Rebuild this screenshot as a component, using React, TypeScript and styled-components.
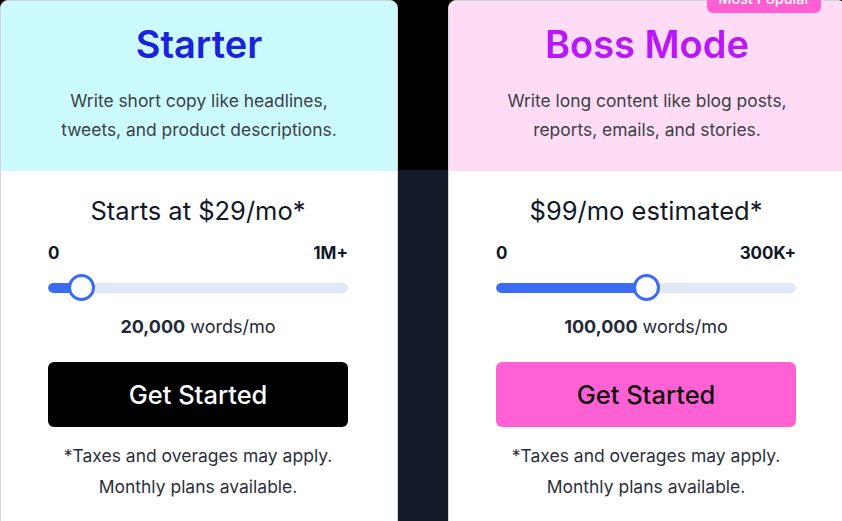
import React from "react";
import styled, { createGlobalStyle } from "styled-components";

const GlobalStyle = createGlobalStyle`
  html, body {
    margin: 0;
    padding: 0;
    background: #000;
    font-family: Inter, "Noto Sans", "Liberation Sans", sans-serif;
  }
`;

type Plan = {
  id: string;
  title: string;
  titleColor: string;
  headBg: string;
  desc: string[];
  price: string;
  max: string;
  percent: number;
  words: string;
  btnBg: string;
  btnColor: string;
  popular?: boolean;
};

const plans: Plan[] = [
  {
    id: "starter",
    title: "Starter",
    titleColor: "#1b22dc",
    headBg: "#cbfbfe",
    desc: ["Write short copy like headlines,", "tweets, and product descriptions."],
    price: "Starts at $29/mo*",
    max: "1M+",
    percent: 11,
    words: "20,000",
    btnBg: "#000000",
    btnColor: "#ffffff",
  },
  {
    id: "boss",
    title: "Boss Mode",
    titleColor: "#b817f7",
    headBg: "#ffdcf5",
    desc: ["Write long content like blog posts,", "reports, emails, and stories."],
    price: "$99/mo estimated*",
    max: "300K+",
    percent: 50,
    words: "100,000",
    btnBg: "#ff61d5",
    btnColor: "#111111",
    popular: true,
  },
];

const Page = styled.div`
  width: 842px;
  height: 521px;
  overflow: hidden;
  background: linear-gradient(to bottom, #000 0, #000 170px, #141a28 170px);
  display: flex;
  gap: 50px;
`;

const Card = styled.div`
  position: relative;
  flex: 0 0 398px;
  height: 560px;
  box-sizing: border-box;
  border: 1px solid #d4d4d8;
  border-radius: 8px;
  background: #fff;
`;

const Head = styled.div<{ $bg: string }>`
  background: ${(p) => p.$bg};
  height: 170px;
  box-sizing: border-box;
  padding-top: 20px;
  text-align: center;
  border-radius: 8px 8px 0 0;
`;

const Title = styled.h2<{ $color: string }>`
  margin: 0;
  font-size: 38px;
  line-height: 46px;
  font-weight: 600;
  color: ${(p) => p.$color};
`;

const Desc = styled.p`
  margin: 19px 0 0;
  font-size: 17.4px;
  line-height: 29px;
  color: #3b3f47;
`;

const Badge = styled.div`
  position: absolute;
  top: -18px;
  right: 24px;
  height: 30px;
  padding: 0 11px;
  display: flex;
  align-items: center;
  border-radius: 6px;
  background: #ff5fd2;
  color: #fff;
  font-size: 14.5px;
  font-weight: 500;
`;

const Body = styled.div`
  padding: 24px 49px 0 47px;
  display: flex;
  flex-direction: column;
  align-items: stretch;
  text-align: center;
`;

const Price = styled.div`
  font-size: 25.5px;
  line-height: 32px;
  color: #111827;
`;

const Labels = styled.div`
  margin-top: 16px;
  display: flex;
  justify-content: space-between;
  font-size: 17px;
  line-height: 20px;
  font-weight: 700;
  color: #111827;
`;

const Slider = styled.div`
  margin-top: 11px;
  height: 28px;
  position: relative;
  display: flex;
  align-items: center;
`;

const Track = styled.div`
  width: 100%;
  height: 10px;
  border-radius: 5px;
  background: #e1e8f8;
  overflow: hidden;
`;

const Fill = styled.div`
  height: 100%;
  background: #3b6cf6;
  border-radius: 5px;
`;

const Thumb = styled.div`
  position: absolute;
  top: 0;
  width: 27px;
  height: 27px;
  box-sizing: border-box;
  margin-left: -13.5px;
  border-radius: 50%;
  border: 3px solid #3b6cf6;
  background: #fff;
`;

const Words = styled.div`
  margin-top: 13px;
  font-size: 18px;
  line-height: 24px;
  color: #1f2937;
  b {
    font-weight: 700;
  }
`;

const Button = styled.button<{ $bg: string; $color: string }>`
  margin-top: 23px;
  height: 65px;
  border: none;
  border-radius: 6px;
  background: ${(p) => p.$bg};
  color: ${(p) => p.$color};
  font-family: inherit;
  font-size: 25.5px;
  font-weight: 500;
  cursor: pointer;
`;

const Note = styled.p`
  margin: 13px 0 0;
  font-size: 17.5px;
  line-height: 31px;
  color: #2d3039;
`;

const PlanCard = ({ plan }: { plan: Plan }) => (
  <Card>
    {plan.popular && <Badge>Most Popular</Badge>}
    <Head $bg={plan.headBg}>
      <Title $color={plan.titleColor}>{plan.title}</Title>
      <Desc>
        {plan.desc[0]}
        <br />
        {plan.desc[1]}
      </Desc>
    </Head>
    <Body>
      <Price>{plan.price}</Price>
      <Labels>
        <span>0</span>
        <span>{plan.max}</span>
      </Labels>
      <Slider>
        <Track>
          <Fill style={{ width: `${plan.percent}%` }} />
        </Track>
        <Thumb style={{ left: `${plan.percent}%` }} />
      </Slider>
      <Words>
        <b>{plan.words}</b> words/mo
      </Words>
      <Button $bg={plan.btnBg} $color={plan.btnColor}>
        Get Started
      </Button>
      <Note>
        *Taxes and overages may apply.
        <br />
        Monthly plans available.
      </Note>
    </Body>
  </Card>
);

export default function App() {
  return (
    <>
      <GlobalStyle />
      <Page>
        {plans.map((p) => (
          <PlanCard key={p.id} plan={p} />
        ))}
      </Page>
    </>
  );
}
